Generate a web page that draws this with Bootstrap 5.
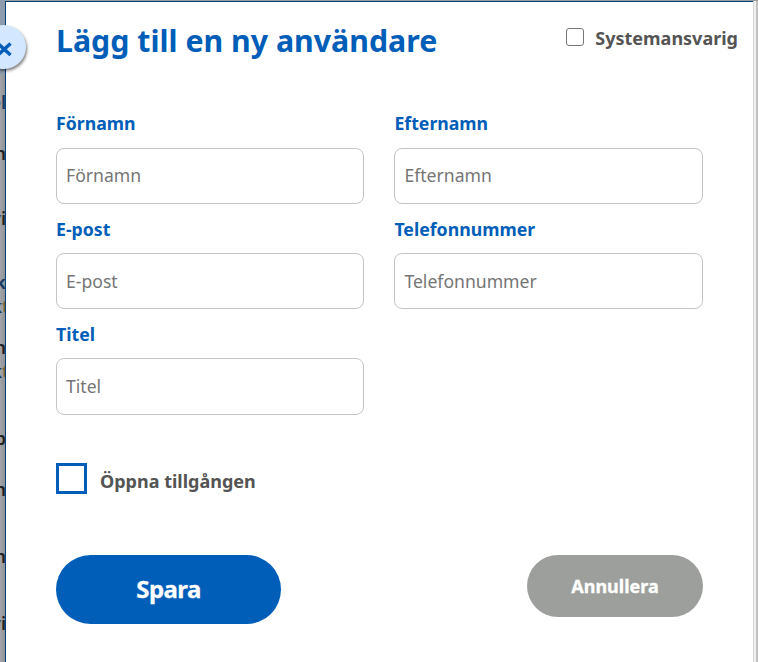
<!DOCTYPE html>
<html lang="sv">
<head>
<meta charset="utf-8">
<meta name="viewport" content="width=device-width, initial-scale=1">
<title>Lägg till en ny användare</title>
<link href="https://cdn.jsdelivr.net/npm/bootstrap@5.3.0/dist/css/bootstrap.min.css" rel="stylesheet">
<style>
body{font-family:"Noto Sans",sans-serif;height:662px;background:#9a9b9f;color:#545454}
.backdrop-strip{width:5px;background:linear-gradient(90deg,#a3a4a8,#919296)}
.backdrop-strip .shade{height:75px;background:#8d9cad}
.strip-text{right:-1px;margin-top:-1px;font-size:18px;line-height:24px;font-weight:600;color:#222}
.strip-text.navy{color:#173a63}
.strip-text.gold{color:#806035;right:-4px;font-weight:500}
.strip-text.gold b{color:#173a63;font-weight:500}
.panel{border-left:1px solid #00417c;border-top:1px solid #00417c;margin-top:1px;padding:0 50px}
.edge{width:5px;background:linear-gradient(90deg,#d6d6d6 0 1px,#f0f0f0 1px 3px,#c1c1c1 3px);margin-top:1px}
.close-btn{left:-18px;top:25px;width:44px;height:44px;background:#d3e8ff;box-shadow:1px 2px 3px rgba(0,0,0,.5);z-index:3}
.head{height:98px;padding-top:17px;margin-right:-35px}
h1{font-size:30.3px;line-height:44px;color:#005eb8}
.sys{font-size:18px;line-height:24px;padding-top:7px}
.sys .form-check-input{width:18px;height:18px;margin:2px 11px 0 0;border:1.5px solid #767676;border-radius:3px}
.fields{display:grid;grid-template-columns:308.4px 308.6px;column-gap:30px;grid-auto-rows:105.15px;margin-top:11.4px}
.fields label{font-size:17.7px;line-height:24px;color:#005eb8;margin-bottom:12.5px}
.fields .form-control{height:56.4px;border:1px solid #c4c4c4;border-radius:8px;padding:0 9px 1.2px;font-size:17.6px;color:#333}
.fields .form-control::placeholder{color:#757575}
.open-row{height:31px;margin-top:36.15px;font-size:18px}
.open-row .form-check-input{width:31px;height:31px;border:3px solid #005eb8;border-radius:0;margin:0 13px 0 0}
.open-row label{line-height:24px;padding-top:6px}
.actions{margin-top:61px}
.actions .btn{border:0;border-radius:40px;color:#fff}
.save{width:225px;height:69px;padding:0;background:#005eb8!important;font-size:24px;letter-spacing:-.6px;-webkit-text-stroke:.3px #fff}
.cancel{width:176px;height:62px;padding:1px 0 0;background:#9d9f9c!important;font-size:18px;-webkit-text-stroke:.3px #fff}
</style>
</head>
<body class="d-flex overflow-hidden position-relative">
<div class="backdrop-strip position-relative overflow-hidden flex-shrink-0" aria-hidden="true">
  <div class="shade"></div>
  <span class="strip-text navy position-absolute" style="top:91px">el</span>
  <span class="strip-text position-absolute" style="top:142px">n</span>
  <span class="strip-text position-absolute" style="top:207px">vi</span>
  <span class="strip-text navy position-absolute fw-bold" style="top:271px">k</span>
  <span class="strip-text gold position-absolute" style="top:295px"><b>k</b>t</span>
  <span class="strip-text position-absolute" style="top:336px">n</span>
  <span class="strip-text gold position-absolute" style="top:360px"><b>k</b>t</span>
  <span class="strip-text position-absolute" style="top:427px">p</span>
  <span class="strip-text position-absolute" style="top:478px">n</span>
  <span class="strip-text position-absolute" style="top:545px">n</span>
  <span class="strip-text position-absolute" style="top:612px">vi</span>
</div>
<button type="button" class="close-btn btn p-0 border-0 rounded-circle position-absolute d-flex align-items-center justify-content-center" aria-label="Stäng">
  <svg width="20" height="20" viewBox="0 0 20 20" fill="none" stroke="#005eb8" stroke-width="3.4"><path d="M4 6.5L16.5 18M16.5 6.5L4 18"/></svg>
</button>
<main class="panel bg-white flex-grow-1">
  <form>
    <div class="head d-flex justify-content-between align-items-start">
      <h1 class="fw-bold mb-0">Lägg till en ny användare</h1>
      <div class="sys d-flex fw-bold"><input class="form-check-input" type="checkbox" id="sys"><label for="sys">Systemansvarig</label></div>
    </div>
    <div class="fields">
      <div><label class="d-block fw-bold" for="f1">Förnamn</label><input class="form-control" id="f1" placeholder="Förnamn"></div>
      <div><label class="d-block fw-bold" for="f2">Efternamn</label><input class="form-control" id="f2" placeholder="Efternamn"></div>
      <div><label class="d-block fw-bold" for="f3">E-post</label><input class="form-control" id="f3" placeholder="E-post"></div>
      <div><label class="d-block fw-bold" for="f4">Telefonnummer</label><input class="form-control" id="f4" placeholder="Telefonnummer"></div>
      <div><label class="d-block fw-bold" for="f5">Titel</label><input class="form-control" id="f5" placeholder="Titel"></div>
    </div>
    <div class="open-row d-flex fw-bold"><input class="form-check-input" type="checkbox" id="open"><label for="open">Öppna tillgången</label></div>
    <div class="actions d-flex justify-content-between align-items-start">
      <button type="button" class="save btn fw-bold">Spara</button>
      <button type="button" class="cancel btn fw-bold">Annullera</button>
    </div>
  </form>
</main>
<div class="edge flex-shrink-0"></div>
<script src="https://cdn.jsdelivr.net/npm/bootstrap@5.3.0/dist/js/bootstrap.bundle.min.js"></script>
</body>
</html>
